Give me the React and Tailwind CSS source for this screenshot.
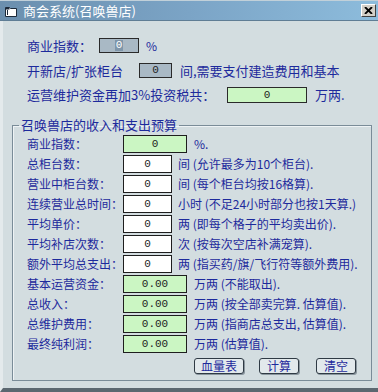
import React from "react";

const F = "font-['Noto_Sans_CJK_SC','Liberation_Sans',sans-serif]";

function Row({ label, value, green, suffix }) {
  return (
    <div className="flex items-center h-[18px]">
      <div className="w-[96px] text-[12px] leading-[18px] text-[#1d2a9c] whitespace-nowrap">{label}</div>
      <div
        className={
          green
            ? "w-[64px] h-[18px] bg-[#cbf6c3] border border-[#1e1e1e] flex items-center justify-center text-[11px] text-[#222] font-['Liberation_Mono',monospace]"
            : "w-[49px] h-[18px] bg-white border border-[#1e1e1e] flex items-center justify-center text-[11px] text-[#222] font-['Liberation_Mono',monospace]"
        }
      >
        {value}
      </div>
      <div
        className={
          green
            ? "ml-[7px] text-[12px] leading-[18px] text-[#1d2a9c] whitespace-nowrap"
            : "ml-[6px] text-[12px] leading-[18px] text-[#1d2a9c] whitespace-nowrap"
        }
      >
        {suffix}
      </div>
    </div>
  );
}

function Btn({ children, w }) {
  return (
    <div
      className={
        w === 50
          ? "w-[50px] h-[16px] rounded-[3px] border border-[#2f3a44] bg-[#e2e9ec] shadow-[1px_1px_0_#8a969e] flex items-center justify-center text-[12px] leading-[14px] text-[#1d2a9c]"
          : "w-[40px] h-[16px] rounded-[3px] border border-[#2f3a44] bg-[#e2e9ec] shadow-[1px_1px_0_#8a969e] flex items-center justify-center text-[12px] leading-[14px] text-[#1d2a9c]"
      }
    >
      {children}
    </div>
  );
}

export default function App() {
  return (
    <div className={`w-[378px] h-[392px] flex flex-col bg-[#d3dde0] overflow-hidden ${F}`}>
      {/* title bar */}
      <div className="h-[21px] border-t border-[#c1d0d9] border-b border-b-[#5f7d95] bg-gradient-to-r from-[#6b8fae] via-[#7ba4c6] to-[#8dbcdc] flex items-center">
        <svg width="12" height="11" viewBox="0 0 12 11" className="ml-[5px] mt-[2px]">
          <path d="M0.5 1.5 H4.5 L5.5 2.5 H11.5 V10.5 H0.5 Z" fill="#ffffff" stroke="#1c2a3a" strokeWidth="1" />
          <rect x="0.5" y="1.5" width="4" height="2" fill="#1c2a3a" />
          <rect x="2" y="4" width="1" height="5" fill="#1c2a3a" />
        </svg>
        <div className="ml-[6px] text-[13px] leading-[16px] text-white whitespace-nowrap">商会系统(召唤兽店)</div>
        <div className="ml-auto mr-[2px] w-[15px] h-[13px] bg-[#d4d0c8] border-t border-l border-t-white border-l-white border-b border-r border-b-[#404040] border-r-[#404040] flex items-center justify-center">
          <svg width="9" height="7" viewBox="0 0 9 7">
            <path d="M1 0 L8 7 M8 0 L1 7" stroke="#000" strokeWidth="1.8" />
          </svg>
        </div>
      </div>

      {/* body */}
      <div className="flex-1 flex flex-col border-l-[3px] border-l-[#e4eaec] border-b-[4px] border-b-[#5b6770]">
        <div className="pl-[24px] flex flex-col text-[#1d2a9c] text-[13px]">
          <div className="mt-[17px] flex items-center h-[15px]">
            <div className="w-[72px] whitespace-nowrap leading-[15px]">商业指数：</div>
            <div className="w-[40px] h-[15px] bg-[#a9b9c5] border border-[#2a2a2a] flex items-center justify-center">
              <span className="bg-[#7f96aa] text-white text-[11px] leading-[11px] px-[1px] font-['Liberation_Mono',monospace]">0</span>
            </div>
            <div className="ml-[7px] text-[12px] leading-[15px]">%</div>
          </div>
          <div className="mt-[10px] flex items-center h-[15px]">
            <div className="w-[112px] whitespace-nowrap leading-[15px]">开新店/扩张柜台</div>
            <div className="w-[33px] h-[15px] bg-[#a9b9c5] border border-[#2a2a2a] flex items-center justify-center text-[11px] text-[#222] font-['Liberation_Mono',monospace]">0</div>
            <div className="ml-[8px] whitespace-nowrap leading-[15px]">间,需要支付建造费用和基本</div>
          </div>
          <div className="mt-[9px] flex items-center h-[16px]">
            <div className="w-[200px] whitespace-nowrap leading-[16px]">运营维护资金再加3%投资税共：</div>
            <div className="w-[80px] h-[16px] bg-[#cbf6c3] border border-[#2a2a2a] flex items-center justify-center text-[11px] text-[#222] font-['Liberation_Mono',monospace]">0</div>
            <div className="ml-[8px] whitespace-nowrap leading-[16px]">万两.</div>
          </div>
        </div>

        <fieldset className="ml-[9px] mt-[14px] w-[360px] border border-[#7a8c98] shadow-[inset_1px_1px_0_#eef3f5]">
          <legend className="ml-[6px] px-[2px] text-[13px] leading-[16px] text-[#1d2a9c] whitespace-nowrap">召唤兽店的收入和支出预算</legend>
          <div className="pl-[14px] pt-[2px] pb-[6px] flex flex-col gap-[2px]">
            <Row label="商业指数：" value="0" green suffix="%." />
            <Row label="总柜台数：" value="0" suffix="间 (允许最多为10个柜台)." />
            <Row label="营业中柜台数：" value="0" suffix="间 (每个柜台均按16格算)." />
            <Row label="连续营业总时间：" value="0" suffix="小时 (不足24小时部分也按1天算.)" />
            <Row label="平均单价：" value="0" suffix="两 (即每个格子的平均卖出价)." />
            <Row label="平均补店次数：" value="0" suffix="次 (按每次空店补满宠算)." />
            <Row label="额外平均总支出：" value="0" suffix="两 (指买药/旗/飞行符等额外费用)." />
            <Row label="基本运营资金：" value="0.00" green suffix="万两 (不能取出)." />
            <Row label="总收入：" value="0.00" green suffix="万两 (按全部卖完算. 估算值)." />
            <Row label="总维护费用：" value="0.00" green suffix="万两 (指商店总支出, 估算值)." />
            <Row label="最终纯利润：" value="0.00" green suffix="万两 (估算值)." />
            <div className="mt-[3px] ml-[167px] flex items-center">
              <Btn w={50}>血量表</Btn>
              <div className="ml-[15px]"><Btn w={40}>计算</Btn></div>
              <div className="ml-[17px]"><Btn w={40}>清空</Btn></div>
            </div>
          </div>
        </fieldset>
      </div>
    </div>
  );
}
